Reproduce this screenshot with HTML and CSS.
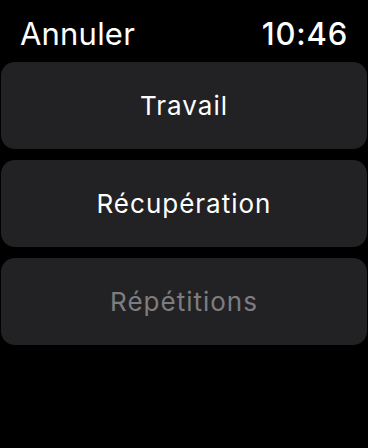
FILE: index.html
```html
<!DOCTYPE html>
<html lang="fr">

<head>
    <meta charset="UTF-8" />
    <meta name="viewport" content="width=device-width, initial-scale=1.0" />
    <title>Intervalles</title>
    <link rel="stylesheet" href="styles.css">
</head>

<body>
    <div class="screen">
        <div class="top-bar">
            <span class="cancel">Annuler</span>
            <span class="clock">10:46</span>
        </div>

        <div class="menu">
            <div class="menu-item">Travail</div>
            <div class="menu-item">Récupération</div>
            <div class="menu-item disabled">Répétitions</div>
        </div>
    </div>
</body>

</html>
```

FILE: styles.css
```css
* {
    margin: 0;
    padding: 0;
    box-sizing: border-box;
}

body {
    font-family: Inter, "Noto Sans", sans-serif;
    background: #000;
    color: #fff;
    width: 368px;
    height: 448px;
    overflow: hidden;
}

.screen {
    padding: 0 1px;
}

.top-bar {
    display: flex;
    justify-content: space-between;
    align-items: center;
    height: 62px;
    padding: 4px 20px 0 19px;
    font-size: 31px;
}

.cancel {
    font-weight: 400;
    letter-spacing: 0.2px;
}

.clock {
    font-weight: 500;
    letter-spacing: 0.8px;
    margin-right: -1px;
}

.menu {
    display: flex;
    flex-direction: column;
    gap: 11px;
}

.menu-item {
    height: 87px;
    display: flex;
    align-items: center;
    justify-content: center;
    background: #222224;
    border-radius: 14px;
    font-size: 26px;
    letter-spacing: 1px;
}

.menu-item.disabled {
    color: #7d7d80;
}
```
